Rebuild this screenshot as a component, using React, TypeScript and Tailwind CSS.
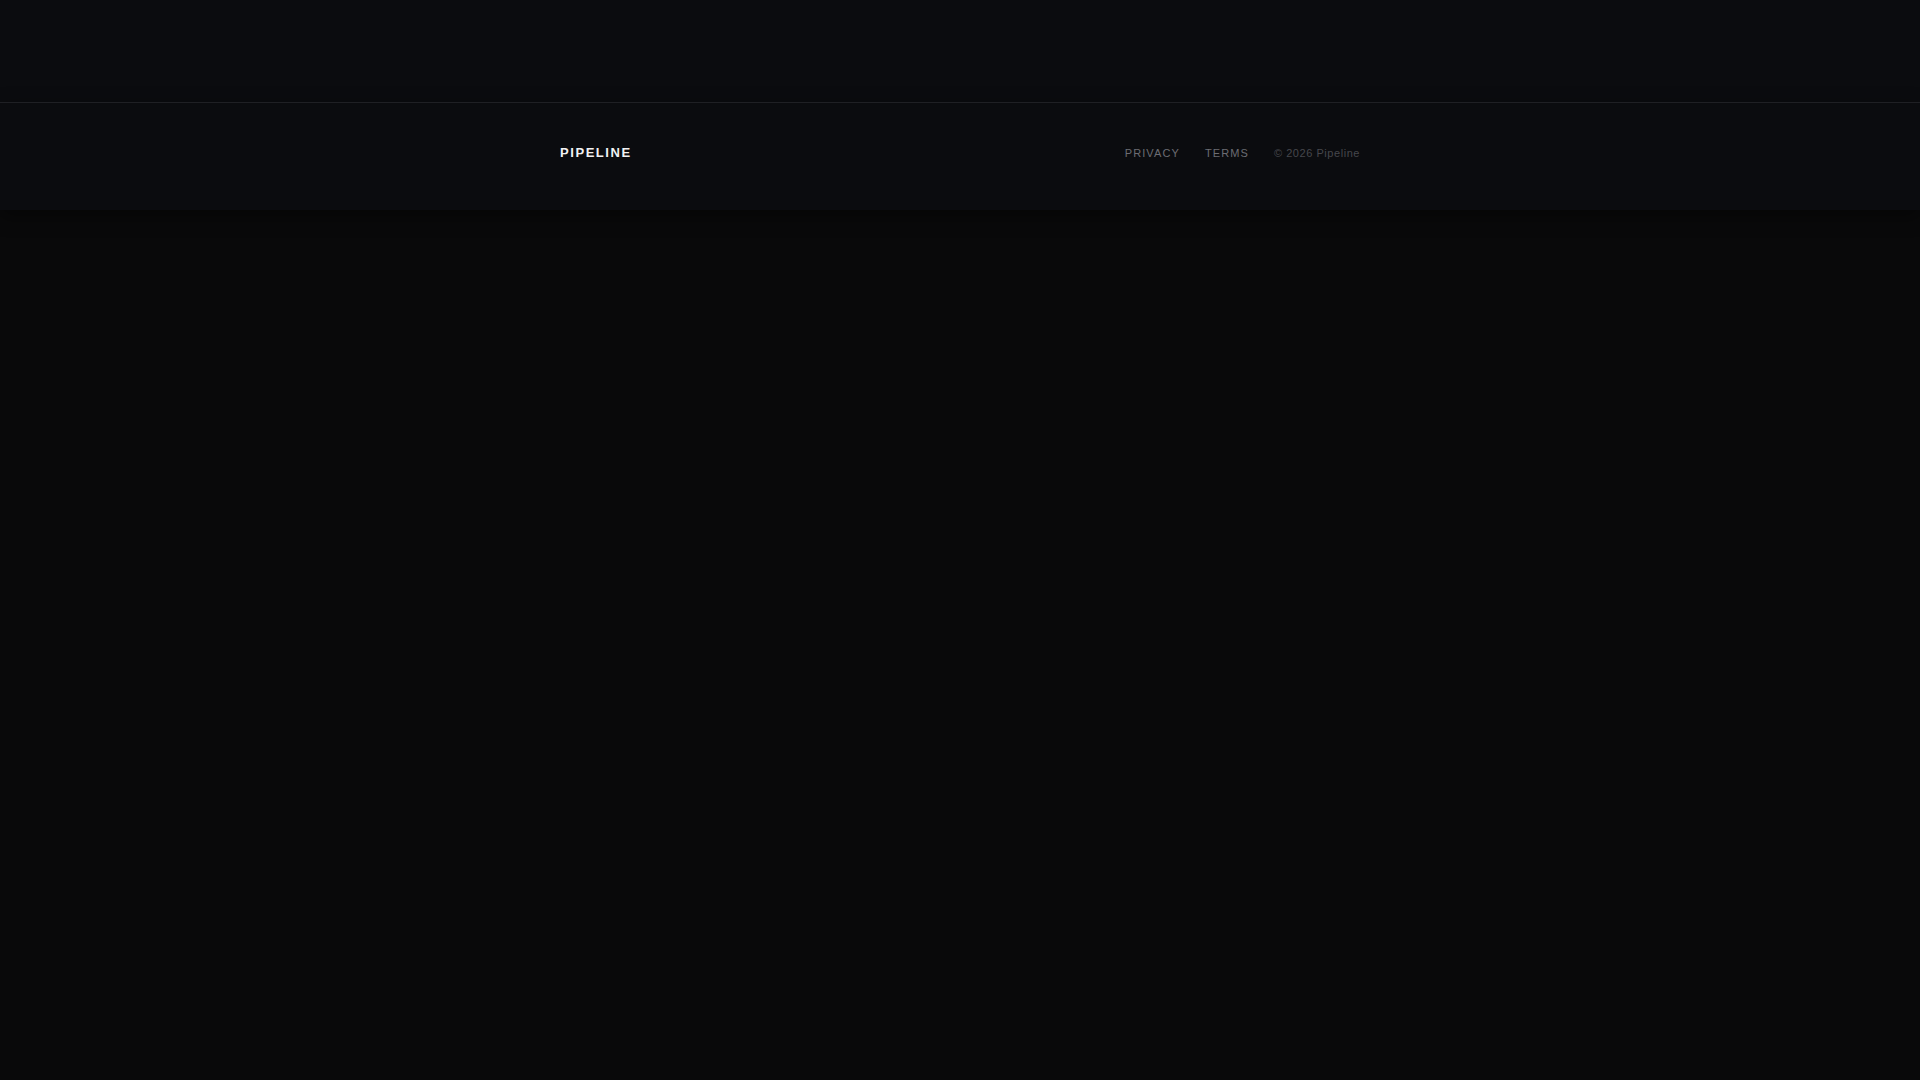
const App = () => {
  return (
    <div className="min-h-screen bg-[#09090a] font-['Liberation_Sans',Arial,sans-serif]">
      {/* empty page body */}
      <div className="h-[102px] bg-[#0b0c0f]" />

      <footer className="border-t border-[#1f2024] bg-[#0b0c0f] shadow-[0_6px_18px_rgba(0,0,0,0.45)]">
        <div className="mx-auto flex max-w-[800px] items-center justify-between pt-[42px] pb-[49px] leading-4">
          <span className="text-[13px] font-bold tracking-[0.12em] text-[#f2f2f3]">
            PIPELINE
          </span>
          <div className="flex items-center gap-[25px] text-[11px]">
            <a className="tracking-[0.1em] text-[#6c6d73]">PRIVACY</a>
            <a className="tracking-[0.1em] text-[#6c6d73]">TERMS</a>
            <span className="tracking-[0.05em] text-[#46474c]">
              © 2026 Pipeline
            </span>
          </div>
        </div>
      </footer>
    </div>
  );
};

export default App;
